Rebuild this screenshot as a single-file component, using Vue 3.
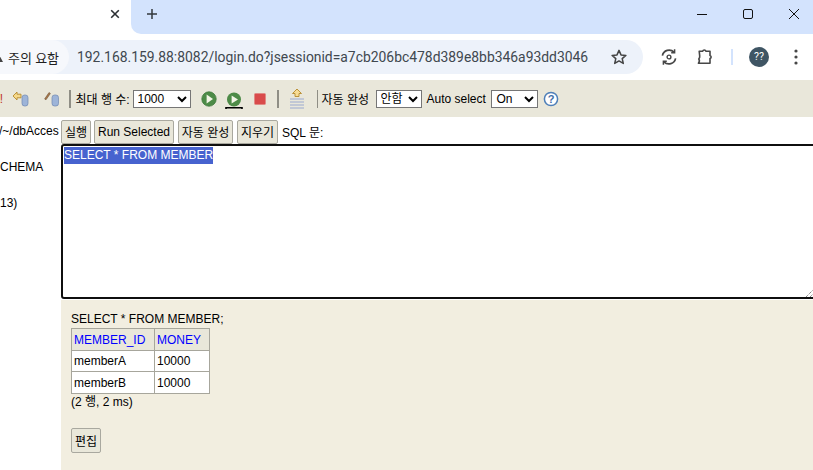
<script setup>
const url = '192.168.159.88:8082/login.do?jsessionid=a7cb206bc478d389e8bb346a93dd3046'
const rows = [
  { id: 'memberA', money: '10000' },
  { id: 'memberB', money: '10000' }
]
</script>

<template>
  <div class="window">
    <header class="tabstrip">
      <div class="tab">
        <svg class="tab-x" width="10" height="10" viewBox="0 0 10 10"><path d="M1.2 1.2 8.8 8.8M8.8 1.2 1.2 8.8" stroke="#2b2f33" stroke-width="1.6" /></svg>
      </div>
      <div class="strip-rest">
        <svg class="plus" width="12" height="12" viewBox="0 0 12 12"><path d="M6 1v10M1 6h10" stroke="#33383d" stroke-width="1.5" /></svg>
        <div class="win-controls">
          <svg width="12" height="12" viewBox="0 0 12 12"><path d="M1 6.5h10" stroke="#111" stroke-width="1" /></svg>
          <svg width="12" height="12" viewBox="0 0 12 12"><rect x="1.5" y="1.5" width="9" height="9" rx="1.5" fill="none" stroke="#111" stroke-width="1" /></svg>
          <svg width="12" height="12" viewBox="0 0 12 12"><path d="M1 1l10 10M11 1 1 11" stroke="#111" stroke-width="1" /></svg>
        </div>
      </div>
    </header>

    <div class="navbar">
      <div class="omnibox">
        <div class="chip">
          <svg class="warn" width="12" height="11" viewBox="0 0 12 11"><path d="M6 1 11 10H1z" fill="#444" /></svg>
          <span>주의 요함</span>
        </div>
        <span class="url">{{ url }}</span>
        <svg class="star" width="18" height="18" viewBox="0 0 18 18"><path d="M9 2.4l2 4.5 4.9.5-3.7 3.2 1.1 4.8L9 12.9l-4.3 2.5 1.1-4.8L2.1 7.4 7 6.9z" fill="none" stroke="#444" stroke-width="1.5" stroke-linejoin="round" /></svg>
      </div>
      <div class="nav-icons">
        <svg width="18" height="18" viewBox="0 0 18 18" fill="none" stroke="#474747" stroke-width="1.7"><path d="M15.6 10.4A6.8 6.8 0 0 1 4 13.8" /><path d="M2.4 7.6A6.8 6.8 0 0 1 14 4.2" /><path d="M14.6 1.2v3.6h-3.4M3.4 16.8v-3.6h3.4" stroke-width="1.5" /><circle cx="9" cy="9" r="1.9" stroke-width="1.4" /></svg>
        <svg class="puzzle" width="18" height="18" viewBox="0 0 18 18" fill="none" stroke="#474747" stroke-width="1.6" stroke-linejoin="round"><path d="M3.2 3.2h3.4a1.8 1.8 0 0 1 3.4 0h4v4.2a1.7 1.7 0 0 1 0 3.2v4.6H2.4c1.2-1.4 1.2-3 .4-4.2.6-.9 1.2-1.6.9-3.2z" /></svg>
        <span class="divider"></span>
        <span class="avatar">??</span>
        <svg class="dots" width="4" height="16" viewBox="0 0 4 16"><circle cx="2" cy="2" r="1.6" fill="#474747" /><circle cx="2" cy="8" r="1.6" fill="#474747" /><circle cx="2" cy="14" r="1.6" fill="#474747" /></svg>
      </div>
    </div>

    <section class="toolbar">
      <span class="cut-red">!</span>
      <svg class="ti rollback" width="18" height="18" viewBox="0 0 18 18"><path d="M1 6l4-4v2.2h4v3.6H5V10z" fill="#f6d98a" stroke="#b58a2c" stroke-width=".9" /><rect x="10" y="5" width="6" height="11" rx="2.6" fill="#9db4d8" stroke="#7088b0" stroke-width=".7" /></svg>
      <svg class="ti commit" width="18" height="18" viewBox="0 0 18 18"><path d="M1.6 9 6 2.5l1.4 1L3 9.8z" fill="#a9784a" stroke="#5e4326" stroke-width=".5" /><rect x="9" y="5" width="6.5" height="11" rx="2.6" fill="#9db4d8" stroke="#7088b0" stroke-width=".7" /></svg>
      <span class="sep sep-first"></span>
      <label class="tl tl-rows">최대 행 수:</label>
      <select class="sel sel-rows"><option>1000</option></select>
      <svg class="play" width="16" height="16" viewBox="0 0 16 16"><circle cx="8" cy="8" r="7.2" fill="#4d8b47" stroke="#3f7a3c" stroke-width=".8" /><path d="M5.6 3.6 12 8l-6.4 4.4z" fill="#f2f5e6" /></svg>
      <svg class="play play2" width="18" height="18" viewBox="0 0 18 18"><circle cx="9" cy="7.5" r="7" fill="#4d8b47" /><path d="M6.6 3.4 13 7.5l-6.4 4.1z" fill="#f2f5e6" /><path d="M1 17v-1.2h16V17" fill="none" stroke="#000" stroke-width="1.6" /></svg>
      <svg class="stop" width="14" height="14" viewBox="0 0 14 14"><rect x="1.5" y="1.5" width="11" height="11" rx="1" fill="#d94b4b" stroke="#e08a85" /></svg>
      <span class="sep sep-stop"></span>
      <svg class="ti history" width="18" height="22" viewBox="0 0 18 22"><path d="M9 1 13.500 5.500H11v3H7v-3H4.500z" fill="#f7dc95" stroke="#b58a2c" stroke-width=".9" /><path d="M2 11h14M2 14h14M2 17h14M2 20h14" stroke="#9aa9d0" stroke-width="1" /></svg>
      <span class="sep sep-hist"></span>
      <label class="tl tl-auto">자동 완성</label>
      <select class="sel sel-auto"><option>안함</option></select>
      <label class="tl tl-sel">Auto select</label>
      <select class="sel sel-on"><option>On</option></select>
      <svg class="help" width="16" height="16" viewBox="0 0 16 16"><circle cx="8" cy="8" r="6.6" fill="#fff" stroke="#4e7fb8" stroke-width="1.5" /><text x="8" y="11.6" text-anchor="middle" class="help-q">?</text></svg>
    </section>

    <div class="page">
      <aside class="tree">
        <div class="tree-db">/~/dbAcces</div>
        <div class="tree-schema">CHEMA</div>
        <div class="tree-ver">13)</div>
      </aside>
      <main class="main">
        <div class="actions">
          <button class="btn b-run">실행</button>
          <button class="btn b-sel">Run Selected</button>
          <button class="btn b-auto">자동 완성</button>
          <button class="btn b-clear">지우기</button>
          <span class="sql-label">SQL 문:</span>
        </div>
        <div class="editor">
          <span class="selected">SELECT * FROM MEMBER</span>
          <svg class="grip" width="8" height="8" viewBox="0 0 8 8"><path d="M0 8 8 0M4 8l4-4" stroke="#555" stroke-width="1" stroke-dasharray="1 1" /></svg>
        </div>
        <div class="result">
          <div class="stmt">SELECT * FROM MEMBER;</div>
          <table class="grid">
            <thead>
              <tr><th class="c1">MEMBER_ID</th><th class="c2">MONEY</th></tr>
            </thead>
            <tbody>
              <tr v-for="r in rows" :key="r.id"><td>{{ r.id }}</td><td>{{ r.money }}</td></tr>
            </tbody>
          </table>
          <div class="count">(2 행, 2 ms)</div>
          <button class="btn b-edit">편집</button>
        </div>
      </main>
    </div>
  </div>
</template>

<style>
html, body { margin: 0; padding: 0; overflow: hidden; background: #fff; }
</style>

<style scoped>
.window {
  width: 813px;
  height: 470px;
  overflow: hidden;
  display: flex;
  flex-direction: column;
  font-family: "Liberation Sans", "Noto Sans CJK KR", sans-serif;
  font-size: 12px;
  color: #000;
  background: #fff;
}
.tabstrip { height: 34px; display: flex; flex: none; background: #fff; }
.tab { width: 131px; display: flex; align-items: center; justify-content: flex-end; padding-right: 11px; box-sizing: border-box; background: #fff; padding-bottom: 6px; }
.strip-rest { flex: 1; background: #d3e3fd; border-bottom-left-radius: 10px; display: flex; align-items: center; padding-bottom: 6px; }
.plus { margin-left: 15px; }
.win-controls { margin-left: auto; margin-right: 13px; display: flex; gap: 34px; }
.navbar { height: 46px; flex: none; display: flex; align-items: flex-start; padding-top: 6px; box-sizing: border-box; background: #fff; }
.omnibox { width: 643px; height: 34px; flex: none; display: flex; align-items: center; background: #edf2fa; border-radius: 0 17px 17px 0; font-family: Roboto, "Noto Sans CJK KR", sans-serif; }
.chip { width: 69px; height: 34px; flex: none; display: flex; align-items: center; background: #f6f8fc; border-radius: 0 17px 17px 0; font-size: 13px; color: #1f1f1f; box-sizing: border-box; white-space: nowrap; }
.warn { margin-left: -8px; margin-right: 4px; flex: none; }
.url { margin-left: 8px; font-size: 13.9px; color: #40484f; white-space: nowrap; }
.star { margin-left: auto; margin-right: 15px; flex: none; }
.nav-icons { display: flex; align-items: center; height: 34px; flex: 1; padding-left: 17px; }
.puzzle { margin-left: 18px; }
.divider { width: 2px; height: 16px; background: #d3e3fd; margin-left: 17px; }
.avatar { width: 20px; height: 20px; border-radius: 50%; background: #3f5564; color: #fff; margin-left: 16px; font: 10.5px/20px Roboto, sans-serif; text-align: center; flex: none; }
.dots { margin-left: 25px; }

.toolbar { height: 37px; flex: none; position: relative; display: flex; align-items: center; background: #e9e7da; white-space: nowrap; }
.cut-red { width: 3px; overflow: hidden; color: #c0392b; direction: rtl; }
.ti, .play, .stop, .help { flex: none; display: block; }
.rollback { margin-left: 9px; }
.commit { margin-left: 13px; }
.sep { width: 1.5px; height: 18px; background: #8f8e85; flex: none; }
.sep-first { margin-left: 8px; }
.tl-rows { margin-left: 5px; width: 55px; }
.sel { height: 18px; font: 12px "Liberation Sans", "Noto Sans CJK KR", sans-serif; padding: 0; box-sizing: border-box; background: #fff; }
.sel-rows { width: 58px; margin-left: 2px; }
.play { margin-left: 10px; }
.play2 { margin-left: 8px; margin-top: 5px; }
.stop { margin-left: 10px; }
.sep-stop { margin-left: 10.5px; }
.history { margin-left: 9px; }
.sep-hist { margin-left: 11px; }
.tl-auto { margin-left: 3.5px; width: 48px; }
.sel-auto { width: 46px; margin-left: 6px; }
.tl-sel { margin-left: 5px; }
.sel-on { width: 47px; margin-left: 5.5px; }
.help { margin-left: 5px; }
.help-q { font: bold 11px "Liberation Sans", sans-serif; fill: #3f6ea8; }

.page { flex: 1; display: flex; min-height: 0; background: #fff; }
.tree { width: 61px; flex: none; overflow: hidden; white-space: nowrap; position: relative; }
.tree-db { margin-top: 7px; line-height: 14px; margin-left: -1px; }
.tree-schema { margin-top: 22px; line-height: 14px; }
.tree-ver { margin-top: 22px; line-height: 14px; }
.main { width: 760px; flex: none; display: flex; flex-direction: column; }
.actions { height: 27px; flex: none; display: flex; align-items: center; box-sizing: border-box; padding-top: 2px; }
.btn { height: 24px; padding: 0; box-sizing: border-box; font: 12px "Liberation Sans", "Noto Sans CJK KR", sans-serif; background: #e9e7da; border: 1px solid #a9a89f; border-radius: 2px; color: #000; }
.b-run { width: 30px; }
.b-sel { width: 80px; margin-left: 3px; }
.b-auto { width: 55px; margin-left: 4px; }
.b-clear { width: 41px; margin-left: 4px; }
.sql-label { margin-left: 4px; }
.editor { height: 155px; flex: none; box-sizing: border-box; border: 2px solid #0f0f0f; border-radius: 3px; padding: 1px; position: relative; background: #fff; line-height: 17px; }
.selected { display: inline-block; background: #4763cf; color: #fff; height: 17px; }
.grip { position: absolute; right: 5px; bottom: 0; }
.result { flex: 1; background: #f2eee0; padding: 11px 10px 0; margin-top: 1px; }
.stmt { line-height: 16px; }
.grid { border-collapse: collapse; margin-top: 1px; }
.grid th, .grid td { border: 1px solid #a7a69c; padding: 0 2px; text-align: left; font-weight: normal; box-sizing: border-box; }
.grid th { background: #e9e7da; color: #0000ff; height: 22px; }
.c1 { width: 83px; }
.c2 { width: 55px; }
.grid td { background: #fff; height: 21px; }
.grid tbody tr:last-child td { height: 22px; }
.count { margin-top: 1px; line-height: 15px; }
.b-edit { display: block; width: 30px; height: 25px; margin-top: 18px; }
</style>
